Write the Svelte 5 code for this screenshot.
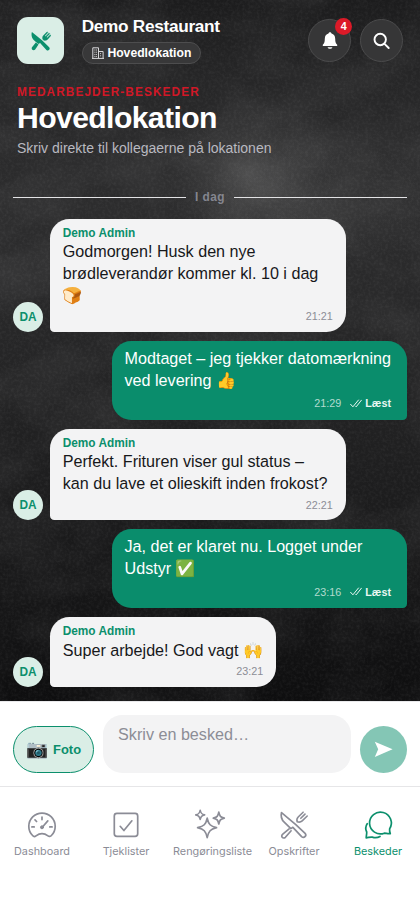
<script>
  const messages = [
    { text: 'Godmorgen! Husk den nye brødleverandør kommer kl. 10 i dag 🍞', time: '21:21' },
    { own: true, text: 'Modtaget – jeg tjekker datomærkning ved levering 👍', time: '21:29' },
    { text: 'Perfekt. Frituren viser gul status – kan du lave et olieskift inden frokost?', time: '22:21' },
    { own: true, text: 'Ja, det er klaret nu. Logget under Udstyr ✅', time: '23:16' },
    { text: 'Super arbejde! God vagt 🙌', time: '23:21' }
  ];
  const tabs = [
    { label: 'Dashboard', icon: 'gauge' },
    { label: 'Tjeklister', icon: 'check' },
    { label: 'Rengøringsliste', icon: 'sparkle' },
    { label: 'Opskrifter', icon: 'cutlery' },
    { label: 'Beskeder', icon: 'chat', active: true }
  ];
</script>

<div class="app">
  <main>
    <svg class="texture" width="420" height="701" aria-hidden="true">
      <defs>
        <linearGradient id="shade" x1="0" y1="0" x2="0" y2="1">
          <stop offset="0" stop-color="#1c1c1d" />
          <stop offset=".12" stop-color="#272728" />
          <stop offset=".3" stop-color="#2d2d2e" />
          <stop offset=".5" stop-color="#262627" />
          <stop offset=".75" stop-color="#1b1b1c" />
          <stop offset="1" stop-color="#0e0e0f" />
        </linearGradient>
        <radialGradient id="smoke">
          <stop offset="0" stop-color="#777" stop-opacity=".42" />
          <stop offset=".5" stop-color="#777" stop-opacity=".17" />
          <stop offset="1" stop-color="#777" stop-opacity="0" />
        </radialGradient>
        <filter id="clouds" x="0" y="0" width="100%" height="100%">
          <feTurbulence type="fractalNoise" baseFrequency=".012 .016" numOctaves="5" seed="8" />
          <feColorMatrix values="0 0 0 0 .6  0 0 0 0 .6  0 0 0 0 .6  .9 0 0 0 -.34" />
        </filter>
        <filter id="grain" x="0" y="0" width="100%" height="100%">
          <feTurbulence type="fractalNoise" baseFrequency=".35" numOctaves="2" seed="3" />
          <feColorMatrix values="0 0 0 0 .7  0 0 0 0 .7  0 0 0 0 .7  .45 0 0 0 -.18" />
        </filter>
      </defs>
      <rect width="420" height="701" fill="url(#shade)" />
      <ellipse cx="248" cy="172" rx="85" ry="75" fill="url(#smoke)" />
      <ellipse cx="320" cy="205" rx="130" ry="60" fill="url(#smoke)" opacity=".5" />
      <rect width="420" height="701" filter="url(#clouds)" opacity=".2" />
      <rect width="420" height="701" filter="url(#grain)" opacity=".28" />
    </svg>

    <header>
      <div class="logo">
        <svg width="20" height="20" viewBox="0 0 20 20" fill="currentColor">
          <path d="M.9 1.100C0 4 .7 7 2.700 9l4.600 3.900 1.800-.9 6.300 6.900c1.900 1.600 4.400-.7 2.800-2.700l-6.900-6.700z" />
          <path d="M7.500 13.500 4.200 18.500c-1.700 2-4.500-.2-3.200-2.300l3.800-4.700z" />
          <path d="M11.700 8.300c-.5-1.600-.1-3 .9-4L16.100.8l.8.700-3 3.300.7.600L18 1.900l.8.800-3.200 3.300.7.700 3-2.900.7.700-3.400 3.900c-1 1-2.500 1.300-3.800.9z" stroke="currentColor" stroke-width=".3" />
        </svg>
      </div>
      <div class="place">
        <div class="name">Demo Restaurant</div>
        <div class="pill">
          <svg width="12" height="12" viewBox="0 0 12 12" fill="none" stroke="#d8d8da"><path d="M.8 11.4V.8h5.700v10.600M6.500 4.500h4.600v6.900M0 11.400h12" /><path d="M2.300 3h2.700M2.300 5.200h2.700M2.300 7.400h2.700M2.300 9.400h2.700M8 6.600h1.600M8 8.800h1.600" stroke-width=".9" stroke-dasharray="1.1 .5" /></svg>
          <span>Hovedlokation</span>
        </div>
      </div>
      <button class="round" aria-label="Notifikationer">
        <svg class="bell" width="16" height="18" viewBox="0 0 16 18" fill="#fff"><path d="M8 .3c.9 0 1.400.6 1.500 1.300 2.300.6 3.700 2.500 3.700 5.100 0 3.500.6 4.500 2 6v1.400H.8v-1.400c1.400-1.500 2-2.500 2-6 0-2.600 1.400-4.500 3.700-5.100C6.600.9 7.100.3 8 .3zM5.600 15.200h4.800c-.5 2.200-4.300 2.200-4.800 0z" /></svg>
        <b class="badge">4</b>
      </button>
      <button class="round" aria-label="Søg">
        <svg width="18" height="18" viewBox="0 0 18 18" fill="none" stroke="#fff" stroke-width="1.900" stroke-linecap="round"><circle cx="7.200" cy="7.500" r="5.700" /><path d="m11.500 11.800 4.200 4.200" /></svg>
      </button>
    </header>

    <section class="heading">
      <div class="eyebrow">MEDARBEJDER-BESKEDER</div>
      <h1>Hovedlokation</h1>
      <p>Skriv direkte til kollegaerne på lokationen</p>
    </section>

    <div class="day"><span>I dag</span></div>

    <section class="thread">
      {#each messages as m}
        <div class="row" class:own={m.own}>
          {#if !m.own}<div class="avatar">DA</div>{/if}
          <div class="bubble">
            {#if !m.own}<div class="sender">Demo Admin</div>{/if}
            <div class="text">{m.text}</div>
            <div class="meta">
              <span>{m.time}</span>
              {#if m.own}
                <span class="read"><svg width="12" height="9" viewBox="0 0 12 9" fill="none" stroke="currentColor" stroke-linecap="round"><path d="m.6 5.300 2.300 2.500L8.500 1M5.600 7.200l.6.600L11.400 1.200" /></svg><b>Læst</b></span>
              {/if}
            </div>
          </div>
        </div>
      {/each}
    </section>
  </main>

  <form class="composer">
    <button type="button" class="photo"><span class="camera">📷</span><span>Foto</span></button>
    <textarea placeholder="Skriv en besked…"></textarea>
    <button type="button" class="send" aria-label="Send">
      <svg width="19" height="17" viewBox="0 0 19 17" fill="#fff"><path d="M.8.7 18.600 8.300.8 16 4.200 8.300z" /></svg>
    </button>
  </form>

  <nav>
    {#each tabs as t}
      <a href="#{t.icon}" class:active={t.active}>
        <svg width="30" height="30" viewBox="0 0 30 30" fill="none" stroke="currentColor" stroke-width="1.700" stroke-linecap="round" stroke-linejoin="round">
          {#if t.icon === 'gauge'}
            <path d="M9 25.900c-1 .8-2.600.6-3.400-.4A13.200 13.200 0 1 1 24.400 25.500c-.8 1-2.400 1.200-3.400.4-3.600-2.700-8.400-2.700-12 0z" />
            <path d="M4.900 16.900h2.300M22.800 16.900h2.300M8 9.900l1.600 1.600M15 7v2.600M15.500 17l5.300-6.100" />
            <circle cx="15" cy="17.300" r="1.500" fill="currentColor" stroke-width="1" />
          {:else if t.icon === 'check'}
            <rect x="3.300" y="3.300" width="23.400" height="23" rx="2.600" />
            <path d="m9.200 16.300 3.700 4.200 8-9.700" />
          {:else if t.icon === 'sparkle'}
            <path d="M12.200 8.200c1.400 6.300 3.200 8 9.300 9.500-6.100 1.500-7.900 3.300-9.300 9.900-1.400-6.600-3.200-8.400-9.600-9.900 6.400-1.500 8.200-3.200 9.600-9.500zM5.200.4C5.900 3.400 6.600 4.100 9.600 4.900 6.600 5.700 5.900 6.400 5.200 9.400 4.500 6.400 3.800 5.700.8 4.900 3.800 4.100 4.500 3.400 5.200.4zM23.800 2.200c.8 4 1.700 5 5.500 5.900-3.800.9-4.700 1.900-5.500 5.900-.8-4-1.700-5-5.500-5.900 3.800-.9 4.700-1.900 5.500-5.900z" />
          {:else if t.icon === 'cutlery'}
            <path d="M2.500 2.600c-.8 3.200-.1 6.800 2.700 9.500l6.700 6.500 2-1.300 8.700 9.300c2.400 2.100 5.500-.8 3.500-3.300l-9.300-8.700z" />
            <path d="m10.100 18.800-6.300 5.300c-2.600 2.100.2 5.300 2.600 3.200l5.700-6.500" />
            <path d="M18.200 11.700c-.7-2-.2-3.500 1-4.700l4.900-4.800M21.800 8.300l4.200-4.200M18.200 11.700c1.900.7 3.700.3 5-.9l5-4.800" stroke-width="1.600" />
          {:else}
            <path d="M26.600 18.900A10.900 10.900 0 1 0 21.300 23.200c2 .1 3.800.7 6 .4-.8-1.500-.8-3-.7-4.700z" />
            <path d="M4.200 13.700c-1.700 2.600-1.700 5.900-.5 8.300.1 2-.4 3.800-.5 5.800 2.200-.2 4.200-1 6.100-.7 2.700.9 5.400.7 7.700-.6" />
          {/if}
        </svg>
        <span>{t.label}</span>
      </a>
    {/each}
  </nav>
</div>

<style>
  :global(body) { background: #fff; }
  .app {
    width: 420px; height: 909px; display: flex; flex-direction: column; overflow: hidden;
    font-family: "Liberation Sans", Arial, "Noto Color Emoji", sans-serif; background: #fff;
  }
  .app * { box-sizing: border-box; }
  button { font: inherit; padding: 0; margin: 0; border: 0; }
  main { position: relative; height: 701px; flex: none; isolation: isolate; background: #222; }
  .texture { position: absolute; inset: 0; z-index: -1; display: block; }

  header { display: flex; align-items: flex-start; padding: 17px 17px 0; height: 81px; }
  .logo {
    width: 47.400px; height: 47.400px; border-radius: 11px; background: #daeee6; color: #0b8f6c;
    display: flex; align-items: center; justify-content: center; flex: none;
  }
  .logo svg { display: block; }
  .place { flex: 1; padding-left: 17.300px; display: flex; flex-direction: column; align-items: flex-start; }
  .name { color: #fff; font-weight: 700; font-size: 17.230px; line-height: 18px; letter-spacing: -.3px; }
  .pill {
    margin-top: 7px; height: 22px; padding: 0 8.300px 0 9px; border-radius: 11px; display: flex; align-items: center; gap: 3.700px;
    border: 1px solid #4d4d4e; background: #383839; color: #fff; font-size: 12.200px; line-height: 16px; font-weight: 700;
  }
  .pill span { margin-top: -1px; }
  .round {
    position: relative; width: 43px; height: 43px; margin: 2.300px 0 0 8.600px; border-radius: 50%; flex: none;
    background: #363637; border: 1px solid #4b4b4c; display: flex; align-items: center; justify-content: center;
  }
  .badge {
    position: absolute; right: -2px; top: -2px; width: 17.200px; height: 17.200px; border-radius: 50%;
    background: #dc1a28; color: #fff; font-size: 10.770px; line-height: 17.200px; text-align: center;
  }

  .heading { padding: 4px 17px 0; height: 109px; }
  .eyebrow { color: #d01827; font-size: 11.850px; font-weight: 700; letter-spacing: 1.080px; line-height: 14px; }
  h1 { margin: 2px 0 0; color: #fff; font-size: 30.150px; line-height: 34px; letter-spacing: -.6px; }
  p { margin: 5px 0 0; color: #b9b9c0; font-size: 14px; line-height: 17px; }

  .day { height: 14px; margin: 0 13px; display: flex; align-items: center; gap: 8.600px; color: #85868f; font-size: 11.850px; font-weight: 700; letter-spacing: .47px; }
  .day::before, .day::after { content: ""; flex: 1; height: 1px; background: #e3e3e5; }

  .thread { padding: 15px 13px 0; display: flex; flex-direction: column; gap: 8.600px; }
  .row { display: flex; align-items: flex-end; gap: 6.500px; }
  .own { justify-content: flex-end; }
  .avatar {
    width: 30.200px; height: 30.200px; border-radius: 50%; flex: none; background: #daeee6; color: #0b8f6c;
    font-size: 11.850px; font-weight: 700; display: flex; align-items: center; justify-content: center;
  }
  .bubble { max-width: 296px; padding: 6.800px 13px 9.300px; border-radius: 19.400px 19.400px 19.400px 4.300px; background: #f3f3f4; color: #17181b; }
  .own .bubble { width: 295px; padding: 7.700px 16px 8.400px 12.500px; border-radius: 19.400px 19.400px 4.300px 19.400px; background: #0a8d6c; color: #fff; }
  .sender { color: #0b8f6c; font-size: 11.850px; line-height: 14px; font-weight: 700; margin-bottom: 1.700px; }
  .text { font-size: 16.150px; line-height: 21.600px; }
  .meta { display: flex; justify-content: flex-end; font-size: 10.770px; line-height: 12.400px; padding-top: 5px; color: #8c8d96; }
  .row:not(.own) .meta { padding-top: 4px; }
  .own .meta { padding: 6px 0 2px; color: #b2dbcf; gap: 9px; }
  .read { display: flex; align-items: center; gap: 3px; color: #e9f7f2; }

  .composer { height: 86px; flex: none; border-top: 1px solid #e9e9eb; border-bottom: 1px solid #e6e6e8; padding: 13.500px 13px 13px; display: flex; align-items: flex-end; gap: 8.600px; box-sizing: border-box; }
  .photo {
    width: 81px; height: 47.400px; border-radius: 24px; border: 1px solid #0b8f6c; background: #daeee6; color: #0b8f6c;
    font-size: 12.920px; font-weight: 700; display: flex; align-items: center; justify-content: center; gap: 5px; flex: none;
  }
  .camera { font-size: 17.800px; line-height: 20px; }
  textarea {
    flex: 1; min-width: 0; height: 58px; margin: 0; padding: 10px 15.500px; border: 0; border-radius: 19.400px; background: #f3f3f4; resize: none;
    font: 16.150px/18.600px "Liberation Sans", Arial, sans-serif; overflow: hidden;
  }
  textarea::placeholder { color: #8c8d96; opacity: 1; }
  .send { width: 47.400px; height: 47.400px; border-radius: 50%; background: #84c6b5; display: flex; align-items: center; justify-content: center; flex: none; }

  nav { display: flex; padding-top: 22.500px; }
  nav a { width: 84px; padding: 0 5px; display: flex; flex-direction: column; align-items: center; color: #8b8c96; text-decoration: none; font: 10.850px/16px Inter, "Liberation Sans", sans-serif; }
  nav a span { margin-top: 3.500px; max-width: 74px; white-space: nowrap; }
  nav svg { display: block; overflow: visible; }
  nav a.active { color: #0b8f6c; }
</style>
